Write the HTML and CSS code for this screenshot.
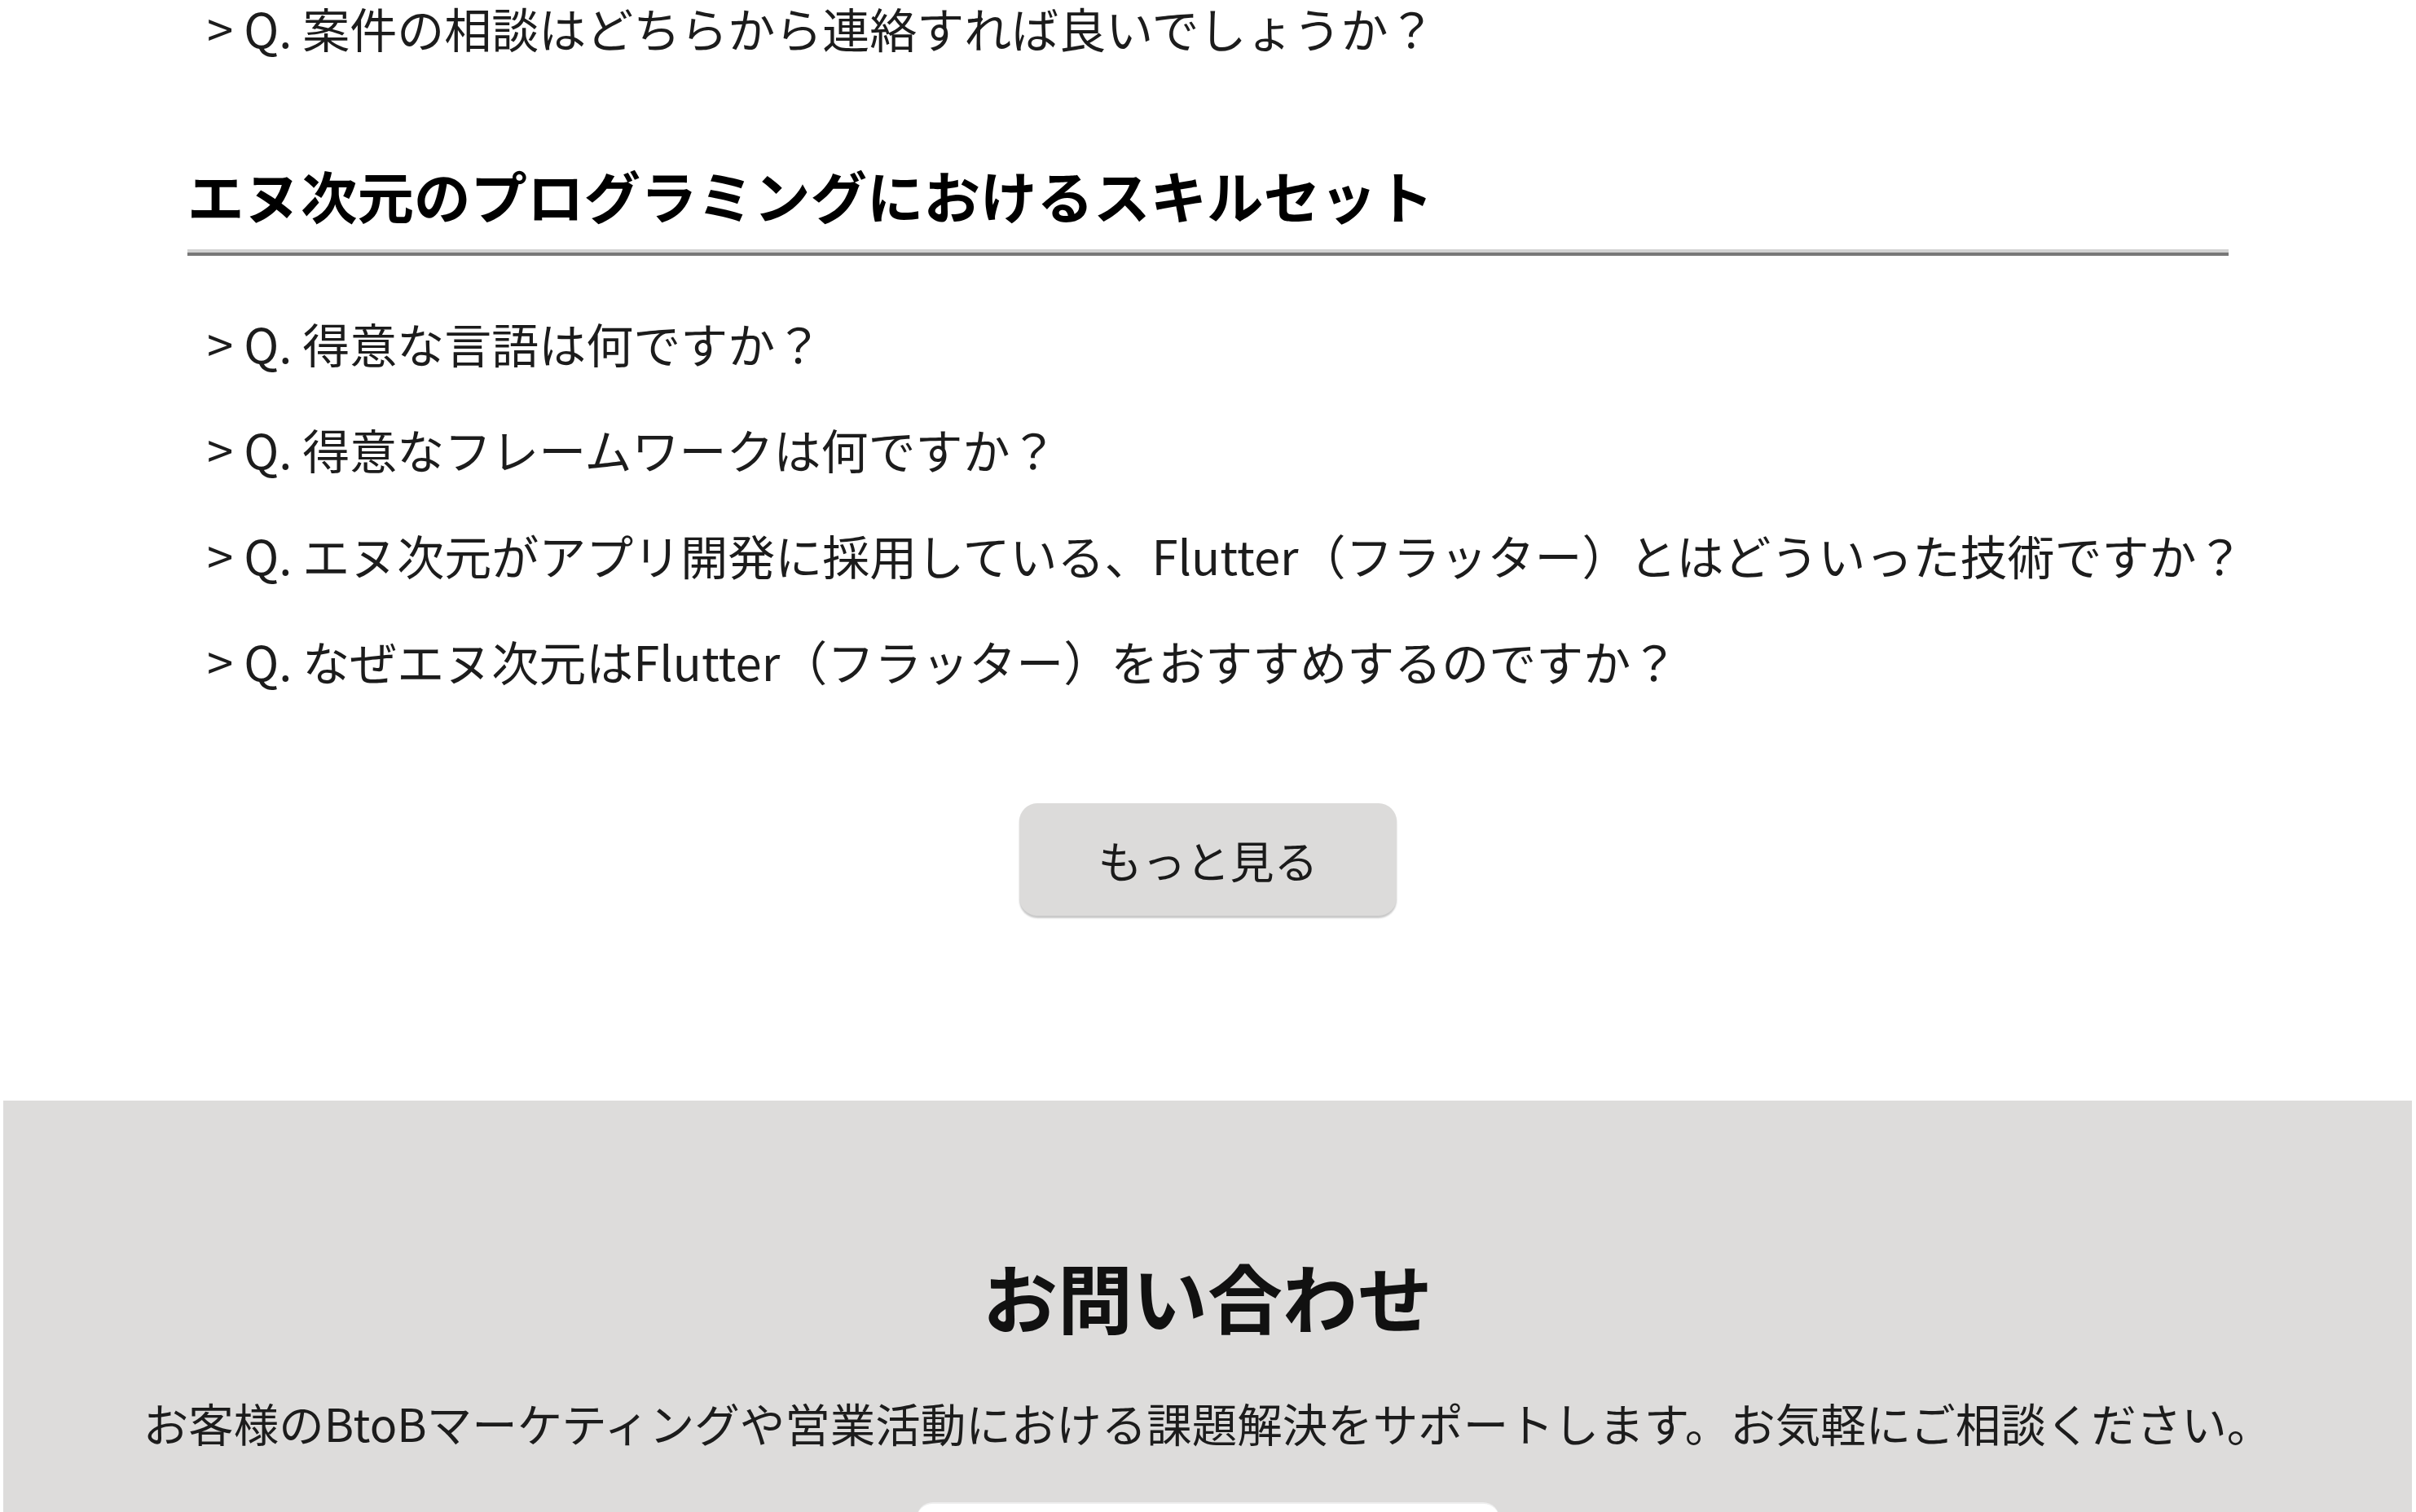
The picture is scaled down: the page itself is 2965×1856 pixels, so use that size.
FILE: index.html
```html
<!DOCTYPE html>
<html lang="ja">
<head>
<meta charset="utf-8">
<title>FAQ</title>
<link rel="stylesheet" href="styles.css">
</head>
<body>
<div class="page">
  <section class="faq">
    <ul class="faq-list">
      <li class="faq-item faq-item-top">&gt; Q. 案件の相談はどちらから連絡すれば良いでしょうか？</li>
    </ul>
    <h2 class="faq-heading">エヌ次元のプログラミングにおけるスキルセット</h2>
    <ul class="faq-list list-after-heading">
      <li class="faq-item">&gt; Q. 得意な言語は何ですか？</li>
      <li class="faq-item">&gt; Q. 得意なフレームワークは何ですか？</li>
      <li class="faq-item">&gt; Q. エヌ次元がアプリ開発に採用している、Flutter（フラッター）とはどういった技術ですか？</li>
      <li class="faq-item">&gt; Q. なぜエヌ次元はFlutter（フラッター）をおすすめするのですか？</li>
    </ul>
    <div class="more-wrap">
      <button class="more-btn">もっと見る</button>
    </div>
  </section>
  <section class="contact">
    <h2 class="contact-title">お問い合わせ</h2>
    <p class="contact-desc">お客様のBtoBマーケティングや営業活動における課題解決をサポートします。お気軽にご相談ください。</p>
    <div class="contact-btn"></div>
  </section>
</div>
</body>
</html>
```
FILE: styles.css
```css
html, body {
  margin: 0;
  padding: 0;
  background: #ffffff;
  overflow: hidden;
}
body {
  font-family: "Noto Sans CJK JP", "Noto Sans", sans-serif;
  color: #1a1a1a;
}
.faq {
  width: 2505px;
  margin: 0 auto;
}
.faq-list {
  list-style: none;
  margin: 0;
  padding: 0 0 0 24px;
}
.faq-item {
  font-size: 58px;
  line-height: 130px;
  height: 130px;
  white-space: nowrap;
  color: #1c1c1c;
}
.faq-item-top {
  line-height: 68px;
  height: 68px;
}
.faq-heading {
  margin: 121px 0 0 0;
  font-size: 69.5px;
  line-height: 100px;
  font-weight: 700;
  color: #000;
  padding-bottom: 21px;
  border-bottom: 4px solid #777777;
  box-shadow: 0 -4px 0 #d2d2d2 inset;
}
.list-after-heading {
  margin-top: 42px;
}
.more-wrap {
  display: flex;
  justify-content: center;
  margin-top: 110px;
  padding-bottom: 227px;
}
.more-btn {
  width: 463px;
  height: 138px;
  border: none;
  border-radius: 22px;
  background: #dcdbda;
  box-shadow: 0 3px 2px #c9c9c9;
  font-family: "Noto Sans CJK JP", sans-serif;
  font-size: 54px;
  color: #1a1a1a;
  padding: 0;
}
.contact {
  margin: 0 5px 0 4px;
  background: #dddcdb;
  padding-top: 173px;
  display: flex;
  flex-direction: column;
  align-items: center;
  min-height: 700px;
}
.contact-title {
  margin: 0;
  font-size: 92px;
  line-height: 132px;
  font-weight: 700;
  color: #111;
}
.contact-desc {
  margin: 48px 0 0 0;
  font-size: 55.5px;
  line-height: 84px;
  color: #1c1c1c;
  white-space: nowrap;
}
.contact-btn {
  margin-top: 56px;
  width: 715px;
  height: 140px;
  border-radius: 20px;
  background: #ffffff;
  border-top: 2px solid #eeeeee;
}
```
